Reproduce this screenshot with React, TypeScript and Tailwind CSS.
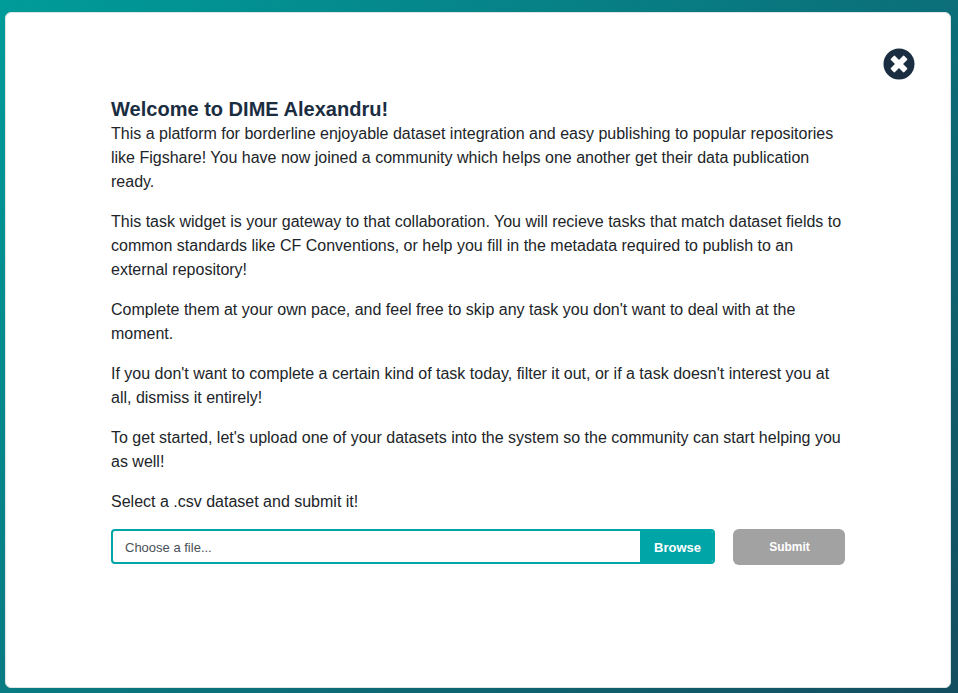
const paragraphs = [
  ["This a platform for borderline enjoyable dataset integration and easy publishing to popular repositories", "like Figshare! You have now joined a community which helps one another get their data publication", "ready."],
  ["This task widget is your gateway to that collaboration. You will recieve tasks that match dataset fields to", "common standards like CF Conventions, or help you fill in the metadata required to publish to an", "external repository!"],
  ["Complete them at your own pace, and feel free to skip any task you don't want to deal with at the", "moment."],
  ["If you don't want to complete a certain kind of task today, filter it out, or if a task doesn't interest you at", "all, dismiss it entirely!"],
  ["To get started, let's upload one of your datasets into the system so the community can start helping you", "as well!"],
  ["Select a .csv dataset and submit it!"],
];

function CloseButton() {
  return (
    <button aria-label="Close" className="ml-auto mr-[35px] block h-8 w-8">
      <svg viewBox="0 0 32 32" className="h-8 w-8">
        <circle cx="16" cy="16" r="15.5" fill="#1b2d41" />
        <g fill="#fff" transform="rotate(45 16 16)">
          <rect x="6.5" y="13.1" width="19" height="5.8" rx="1" />
          <rect x="13.1" y="6.5" width="5.8" height="19" rx="1" />
        </g>
      </svg>
    </button>
  );
}

export default function App() {
  return (
    <div className="h-[693px] w-[958px] overflow-hidden bg-linear-[135deg] from-[#009c9a] to-[#144d60] pl-[5px] pt-3 font-['Liberation_Sans',Arial,sans-serif] text-[#212529]">
      <main className="h-[676px] w-[946px] rounded-md border border-[#dfe5e5] bg-white pt-[35px]">
        <CloseButton />
        <section className="ml-[105px] mt-[17px] w-[740px]">
          <h1 className="text-[20.05px] font-bold leading-6 text-[#1b2d41]">Welcome to DIME Alexandru!</h1>
          <div className="mt-px flex flex-col gap-4 text-base leading-6">
            {paragraphs.map((lines, i) => (
              <p key={i}>
                {lines.map((line) => (
                  <span key={line} className="block whitespace-nowrap">{line}</span>
                ))}
              </p>
            ))}
          </div>
          <form className="mt-[15px] flex">
            <label className="flex h-[35px] w-[604px] overflow-hidden rounded border-2 border-[#00a5a8] text-[13px]">
              <span className="flex flex-1 items-center pl-3 pt-0.5 text-[#495057]">Choose a file...</span>
              <span className="flex w-[73px] items-center justify-center bg-[#00a5a8] pl-0.5 pt-0.5 font-bold text-white">Browse</span>
            </label>
            <button type="button" className="ml-[18px] h-9 w-28 rounded-md bg-[#a2a2a2] pl-px text-xs font-bold text-white">Submit</button>
          </form>
        </section>
      </main>
    </div>
  );
}
